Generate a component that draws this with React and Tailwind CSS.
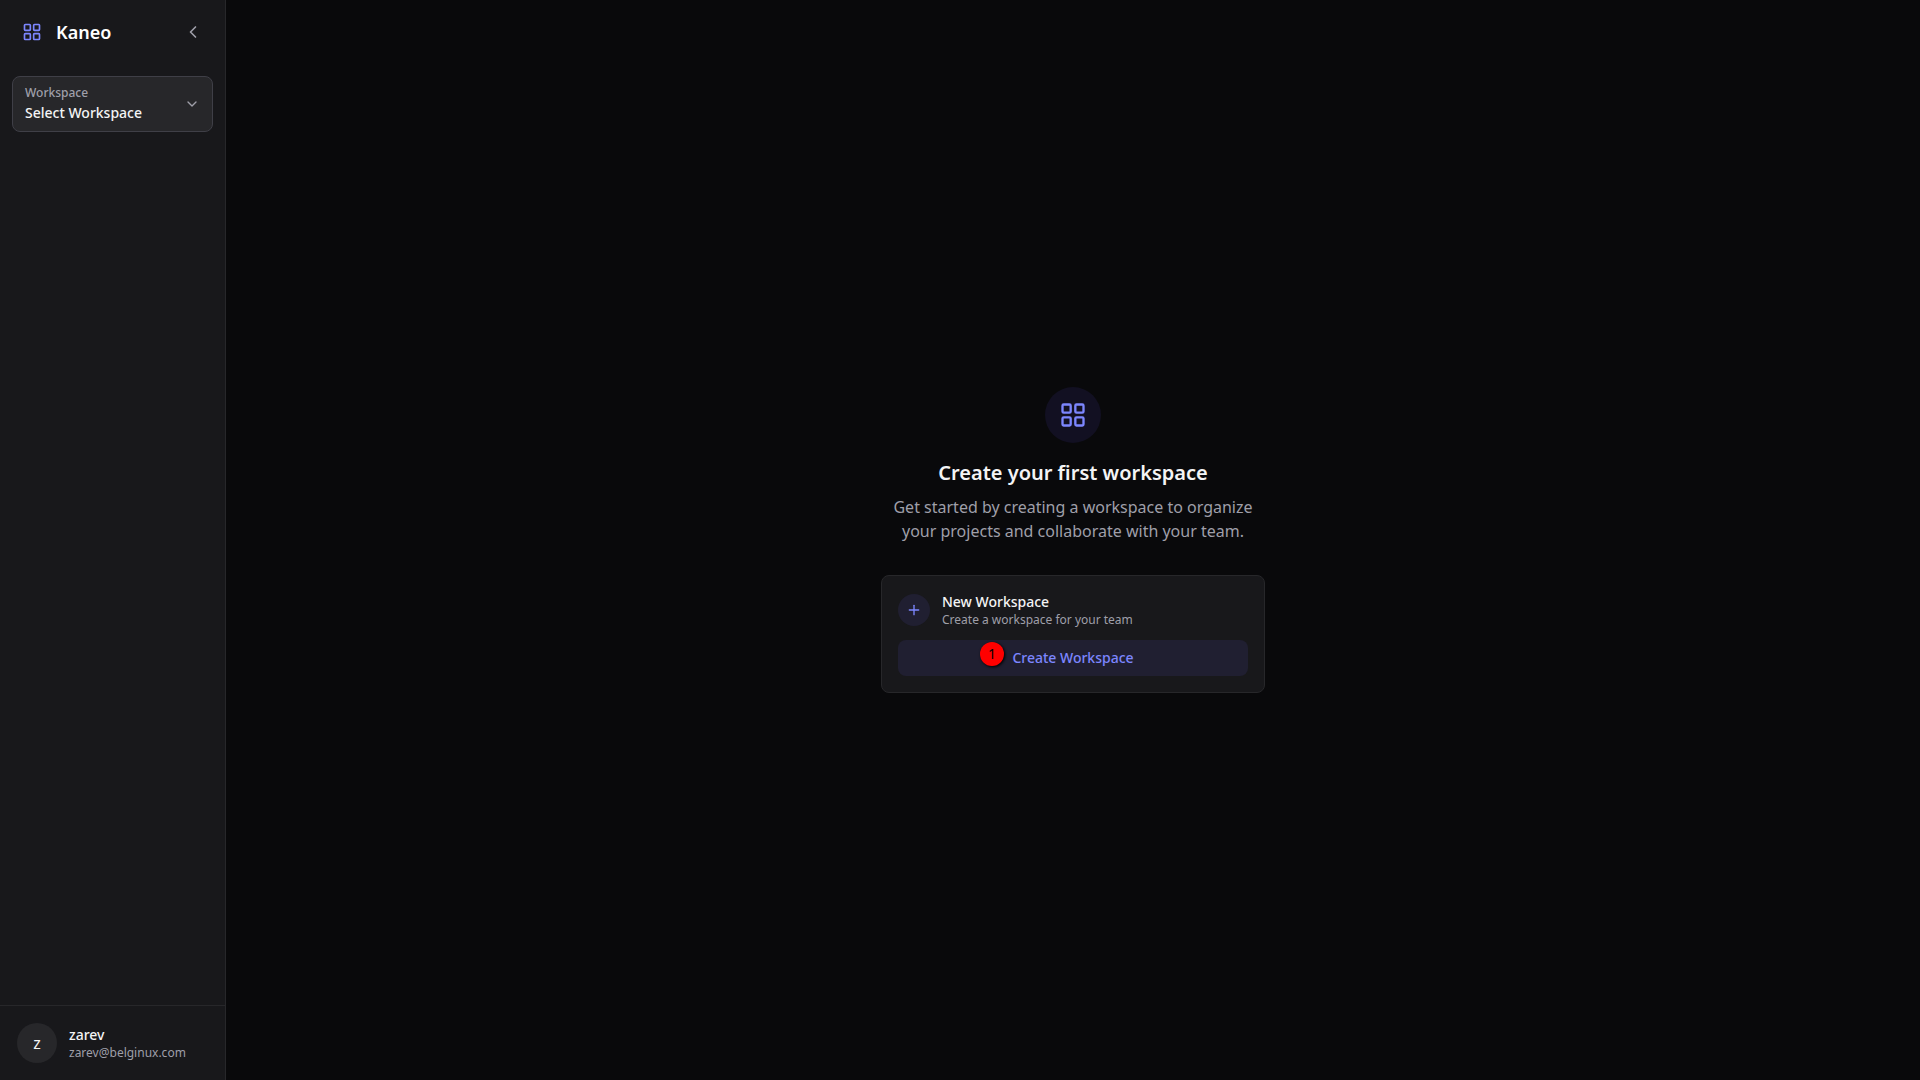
import React from 'react';
import { ChevronDown, ChevronLeft, LayoutGrid, Plus } from 'lucide-react';

function Sidebar() {
  return (
    <aside className="w-[226px] shrink-0 flex flex-col bg-zinc-900 border-r border-zinc-800">
      <div className="h-16 flex items-center justify-between pl-5 pr-[18px]">
        <div className="flex items-center gap-3">
          <div className="w-6 h-6 flex items-center justify-center text-indigo-400">
            <LayoutGrid className="w-5 h-5" />
          </div>
          <h1 className="text-lg font-semibold text-white">Kaneo</h1>
        </div>
        <button type="button" aria-label="Collapse sidebar" className="p-1 text-zinc-400">
          <ChevronLeft className="w-5 h-5" />
        </button>
      </div>

      <div className="px-3 pt-3">
        <button
          type="button"
          className="w-full flex items-center justify-between px-3 py-2 text-left bg-zinc-800 border border-zinc-700 rounded-lg"
        >
          <span className="flex flex-col gap-0.5">
            <span className="text-xs font-medium text-zinc-400">Workspace</span>
            <span className="text-sm font-medium text-zinc-100">Select Workspace</span>
          </span>
          <ChevronDown className="w-4 h-4 text-zinc-400" />
        </button>
      </div>

      <div className="mt-auto flex items-center gap-3 p-[17px] border-t border-zinc-800">
        <div className="w-10 h-10 flex items-center justify-center rounded-full bg-zinc-800 text-base text-zinc-100">
          z
        </div>
        <div>
          <p className="text-sm font-medium text-zinc-100">zarev</p>
          <p className="text-xs text-zinc-400">zarev@belginux.com</p>
        </div>
      </div>
    </aside>
  );
}

export default function App() {
  return (
    <div className="min-h-screen flex bg-zinc-950 font-['Noto_Sans',sans-serif]">
      <Sidebar />
      <main className="flex-1 flex items-center justify-center">
        <div className="w-96 flex flex-col items-center">
          <div className="w-14 h-14 mb-4 flex items-center justify-center rounded-full bg-[#121022] text-indigo-400">
            <LayoutGrid className="w-7 h-7" />
          </div>
          <h2 className="mb-2 text-xl font-semibold text-zinc-100">Create your first workspace</h2>
          <p className="mb-8 text-center text-zinc-400">
            Get started by creating a workspace to organize your projects and collaborate with your team.
          </p>

          <div className="w-full p-4 bg-zinc-900 border border-zinc-800 rounded-lg">
            <div className="mb-3 flex items-center gap-3">
              <div className="w-8 h-8 flex items-center justify-center rounded-full bg-[#201f31] text-indigo-400">
                <Plus className="w-4 h-4" />
              </div>
              <div>
                <h3 className="text-sm font-medium text-zinc-100">New Workspace</h3>
                <p className="text-xs text-zinc-400">Create a workspace for your team</p>
              </div>
            </div>
            <div className="relative">
              <button
                type="button"
                className="w-full px-4 py-2 rounded-lg bg-[#201f31] text-sm font-medium text-indigo-400"
              >
                Create Workspace
              </button>
              {/* step marker */}
              <span className="absolute left-[82px] top-0.5 w-6 h-6 flex items-center justify-center rounded-full bg-[#ff0000] text-sm text-black shadow-[1px_1px_3px_#000]">
                1
              </span>
            </div>
          </div>
        </div>
      </main>
    </div>
  );
}
